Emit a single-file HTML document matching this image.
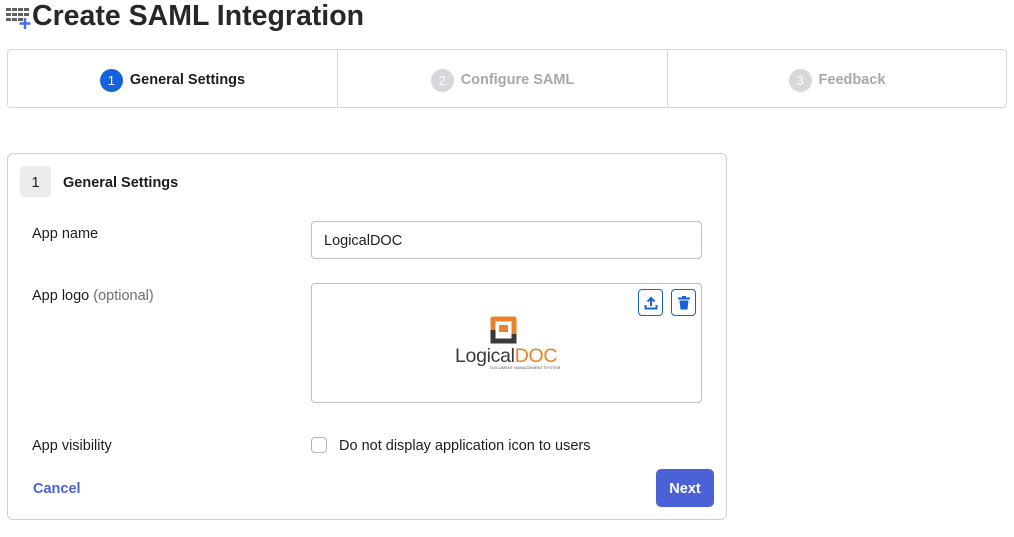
<!DOCTYPE html>
<html><head><meta charset="utf-8"><style>
*{box-sizing:border-box;margin:0;padding:0}
body{width:1014px;height:537px;background:#fff;font-family:"Liberation Sans",sans-serif;color:#1d1d21;position:relative;overflow:hidden}
.abs{position:absolute}
h1{position:absolute;left:32px;top:0px;font-size:28.5px;font-weight:bold;letter-spacing:0px;color:#26262b}
.steps{left:7px;top:49px;width:1000px;height:59px;border:1px solid #d7d7dc;border-radius:4px;display:flex}
.step{display:flex;align-items:center;justify-content:center;font-size:14.5px;font-weight:bold;color:#a7a7ad;padding-top:3px}
.step+.step{border-left:1px solid #d7d7dc}
.num{width:23px;height:23px;border-radius:50%;background:#d7d7dc;color:#fff;font-size:13px;display:flex;align-items:center;justify-content:center;margin-right:7px;font-weight:normal}
.step.on{color:#1d1d21}.step.on .num{background:#1662dd}
.card{left:7px;top:153px;width:720px;height:367px;border:1px solid #cfcfd4;border-radius:6px}
.lbl{font-size:14.5px;color:#1d1d21}
input{position:absolute;left:311px;top:221px;width:391px;height:38px;border:1px solid #bfbfc5;border-radius:4px;padding-left:12px;padding-top:2px;font-size:14.5px;font-family:inherit;color:#1d1d21}
.logo{left:311px;top:283px;width:391px;height:120px;border:1px solid #bfbfc5;border-radius:4px}
.ib{width:25px;height:27px;border:1.5px solid #1662dd;border-radius:4px;display:flex;align-items:center;justify-content:center}
</style></head><body>
<svg class="abs" style="left:6px;top:8px" width="26" height="24" viewBox="0 0 26 24">
<g fill="#5f5f66"><rect x="0" y="0" width="5" height="3"/><rect x="6" y="0" width="5" height="3"/><rect x="12" y="0" width="5" height="3"/><rect x="18" y="0" width="5" height="3"/>
<rect x="0" y="5" width="5" height="3"/><rect x="6" y="5" width="5" height="3"/><rect x="12" y="5" width="5" height="3"/><rect x="18" y="5" width="5" height="3"/>
<rect x="0" y="10" width="5" height="3"/><rect x="6" y="10" width="5" height="3"/><rect x="12" y="10" width="5" height="3"/></g>
<path d="M19 10v11M13.5 15.5h11" stroke="#4a6ee0" stroke-width="2.5"/></svg>
<h1>Create SAML Integration</h1>
<div class="abs steps">
<div class="step on" style="width:329px"><span class="num">1</span>General Settings</div>
<div class="step" style="width:330px"><span class="num">2</span>Configure SAML</div>
<div class="step" style="flex:1"><span class="num">3</span>Feedback</div>
</div>
<div class="abs card"></div>
<div class="abs" style="left:20px;top:166px;width:31px;height:31px;background:#ebebed;border-radius:4px;font-size:14.5px;display:flex;align-items:center;justify-content:center;padding-top:2px">1</div>
<div class="abs lbl" style="left:63px;top:175px;font-weight:bold">General Settings</div>
<div class="abs lbl" style="left:32px;top:226px">App name</div>
<input value="LogicalDOC">
<div class="abs lbl" style="left:32px;top:288px">App logo <span style="color:#6e6e78">(optional)</span></div>
<div class="abs logo"></div>
<div class="abs ib" style="left:638px;top:289px"><svg width="14" height="14" viewBox="0 0 14 14"><path d="M7 10V2M3.5 5.5L7 2l3.5 3.5" stroke="#1662dd" stroke-width="2" fill="none"/><path d="M1.5 9v3.5h11V9" stroke="#1662dd" stroke-width="2" fill="none"/></svg></div>
<div class="abs ib" style="left:671px;top:289px"><svg width="12" height="14" viewBox="0 0 12 14"><rect x="0" y="1.5" width="12" height="2" fill="#1662dd"/><rect x="4" y="0" width="4" height="2" fill="#1662dd"/><path d="M1.5 4.5h9l-1 9h-7z" fill="#1662dd"/></svg></div>
<svg class="abs" style="left:490px;top:316px" width="28" height="28" viewBox="0 0 28 28"><path d="M3 16V3h21v15" stroke="#e8832a" stroke-width="5" fill="none" stroke-linejoin="round"/><rect x="9" y="9" width="9" height="7" fill="#e8832a"/><path d="M3 14v11h21v-7" stroke="#3a3a3e" stroke-width="5" fill="none"/></svg>
<div class="abs" style="left:455px;top:345px;font-size:19.5px;letter-spacing:-0.3px;color:#3a3a3e">Logical<span style="color:#e8832a">DOC</span></div>
<div class="abs" style="left:490px;top:365px;font-size:4px;color:#555">DOCUMENT MANAGEMENT SYSTEM</div>
<div class="abs lbl" style="left:32px;top:438px">App visibility</div>
<div class="abs" style="left:311px;top:437px;width:16px;height:16px;border:1.5px solid #b5b5bb;border-radius:4px"></div>
<div class="abs lbl" style="left:339px;top:438px">Do not display application icon to users</div>
<div class="abs" style="left:33px;top:481px;font-size:14.5px;font-weight:bold;color:#4b62d6">Cancel</div>
<div class="abs" style="left:656px;top:469px;width:58px;height:38px;background:#4b62d6;border-radius:5px;color:#fff;font-weight:bold;font-size:14.5px;display:flex;align-items:center;justify-content:center;padding-top:1px">Next</div>
</body></html>
